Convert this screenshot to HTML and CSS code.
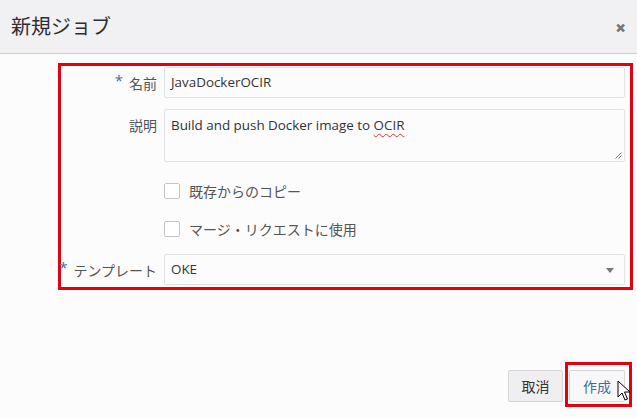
FILE: index.html
```html
<!DOCTYPE html>
<html lang="ja">
<head>
<meta charset="utf-8">
<title>新規ジョブ</title>
<link rel="stylesheet" href="styles.css">
</head>
<body>
<div class="dialog">
  <header class="hd">
    <h1 class="title">新規ジョブ</h1>
    <span class="close" aria-label="閉じる">&#x2715;</span>
  </header>
  <main class="content">
    <form class="form">
      <label class="lbl lbl-mid"><span class="req">*</span>名前</label>
      <div class="field">JavaDockerOCIR</div>

      <label class="lbl lbl-top">説明</label>
      <div class="area">Build and push Docker image to <span class="spell">OCIR</span><span class="grip"><svg width="8" height="8" viewBox="0 0 8 8"><path d="M7.5 1.5 L1.5 7.5 M7.5 4.5 L4.5 7.5" stroke="#777" stroke-width="1" fill="none"/></svg></span></div>

      <span class="spacer"></span>
      <label class="check check-1"><span class="box"></span>既存からのコピー</label>

      <span class="spacer"></span>
      <label class="check check-2"><span class="box"></span>マージ・リクエストに使用</label>

      <label class="lbl lbl-mid lbl-tpl"><span class="req">*</span>テンプレート</label>
      <div class="field select">OKE<span class="caret"></span></div>
    </form>
  </main>
  <footer class="ft">
    <button class="btn" type="button">取消</button>
    <span class="btn-wrap">
      <button class="btn btn-primary" type="button">作成</button>
      <span class="mark"></span>
      <svg class="cursor" width="14" height="22" viewBox="0 0 14 22"><path d="M1 1 L1 17 L5 13 L8 20 L10.5 19 L7.5 12 L13 12 Z" fill="#fff" stroke="#000" stroke-width="1" stroke-linejoin="round"/></svg>
    </span>
  </footer>
</div>
</body>
</html>
```
FILE: styles.css
```css
* { box-sizing: border-box; }
html, body {
  margin: 0;
  padding: 0;
  background: #fcfcfd;
  width: 637px;
  height: 418px;
  overflow: hidden;
  font-family: "Open Sans", "Noto Sans CJK JP", sans-serif;
  color: #333;
}
.dialog {
  width: 637px;
  height: 418px;
  display: flex;
  flex-direction: column;
}
.hd {
  height: 54px;
  background: #f1f1f3;
  border-bottom: 1px solid #cfcfd2;
  display: flex;
  align-items: center;
  justify-content: space-between;
  padding: 0 12px 0 11px;
  flex: none;
}
.title {
  margin: 0;
  font-family: "Noto Sans CJK JP", sans-serif;
  font-weight: 400;
  font-size: 20px;
  color: #2d2d33;
  position: relative;
  top: -1px;
}
.close {
  font-size: 11px;
  font-weight: 700;
  color: #777;
  position: relative;
  top: 1px;
  -webkit-text-stroke: 1px #777;
}
.content {
  padding: 9px 4px 0 58px;
  flex: none;
}
.form {
  margin: 0;
  width: 575px;
  border: 3px solid #e3000f;
  padding: 1px 4px 2px 0;
  display: grid;
  grid-template-columns: 96px 461px;
  column-gap: 7px;
  align-items: start;
}
.lbl {
  font-family: "Noto Sans CJK JP", sans-serif;
  font-size: 14px;
  color: #555;
  text-align: right;
  white-space: nowrap;
  justify-self: end;
  line-height: 20px;
}
.lbl-mid { align-self: center; }
.form > .lbl-top { margin-top: 17px; }
.form > .lbl-tpl { margin-top: 17px; }
.req {
  color: #4a6c9c;
  font-family: "Open Sans", sans-serif;
  font-size: 15px;
  position: relative;
  top: -3px;
  margin-right: 6px;
}
.field {
  height: 31px;
  border: 1px solid #e2e2e6;
  border-radius: 2px;
  background: #fcfcfd;
  font-size: 13.4px;
  line-height: 29px;
  padding: 0 6px;
  color: #333;
  position: relative;
}
.area {
  margin-top: 11px;
  height: 53px;
  border: 1px solid #e2e2e6;
  border-radius: 2px;
  background: #fcfcfd;
  font-size: 13.4px;
  line-height: 20px;
  padding: 5px 6px;
  color: #333;
  position: relative;
}
.spell {
  text-decoration: underline wavy #d33;
  text-decoration-thickness: 1px;
  text-underline-offset: 3px;
}
.grip {
  position: absolute;
  right: 2px;
  bottom: 2px;
  width: 8px;
  height: 8px;
  display: block;
  line-height: 0;
}
.spacer { display: block; }
.check {
  display: flex;
  align-items: center;
  gap: 9px;
  font-family: "Noto Sans CJK JP", sans-serif;
  font-size: 14px;
  color: #555;
  height: 16px;
  line-height: 16px;
}
.check-1 { margin-top: 21px; }
.check-2 { margin-top: 22px; }
.box {
  width: 16px;
  height: 16px;
  border: 1px solid #c6c6ca;
  border-radius: 2px;
  background: #fff;
  flex: none;
}
.select { margin-top: 17px; }
.caret {
  position: absolute;
  right: 10px;
  top: 13px;
  width: 0;
  height: 0;
  border-left: 4px solid transparent;
  border-right: 4px solid transparent;
  border-top: 5px solid #777;
}
.ft {
  margin-top: 80px;
  display: flex;
  justify-content: flex-end;
  gap: 6px;
  padding-right: 12px;
}
.btn {
  height: 32px;
  min-width: 55px;
  border: 1px solid #d5d5d9;
  border-radius: 2px;
  background: #efeff1;
  font-family: "Noto Sans CJK JP", sans-serif;
  font-size: 14px;
  color: #333;
  padding: 0 10px;
}
.btn-primary {
  background: #f8f8fa;
  color: #3f6b9c;
  min-width: 56px;
}
.btn-wrap {
  position: relative;
  display: block;
}
.mark {
  position: absolute;
  left: -4px;
  right: -7px;
  top: -8px;
  bottom: -5px;
  border: 3px solid #e3000f;
  pointer-events: none;
}
.cursor {
  position: absolute;
  left: 48px;
  top: 10px;
}
```
